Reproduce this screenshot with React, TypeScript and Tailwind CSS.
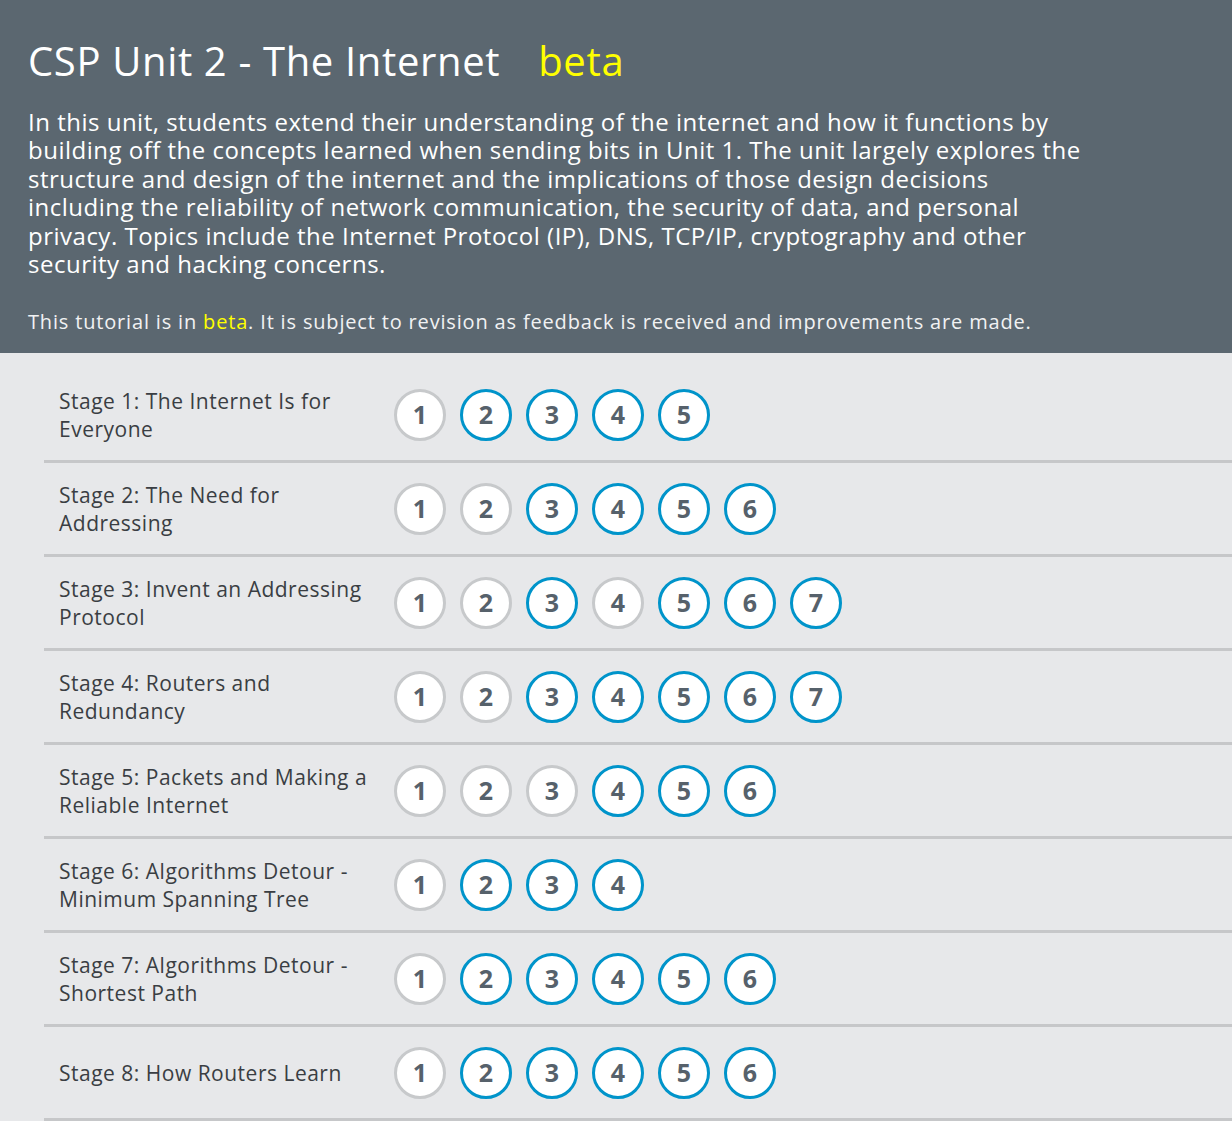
import React from 'react';

type Lesson = 'done' | 'todo';

const stages: { title: string[]; lessons: Lesson[] }[] = [
  { title: ['Stage 1: The Internet Is for', 'Everyone'], lessons: ['done', 'todo', 'todo', 'todo', 'todo'] },
  { title: ['Stage 2: The Need for', 'Addressing'], lessons: ['done', 'done', 'todo', 'todo', 'todo', 'todo'] },
  { title: ['Stage 3: Invent an Addressing', 'Protocol'], lessons: ['done', 'done', 'todo', 'done', 'todo', 'todo', 'todo'] },
  { title: ['Stage 4: Routers and', 'Redundancy'], lessons: ['done', 'done', 'todo', 'todo', 'todo', 'todo', 'todo'] },
  { title: ['Stage 5: Packets and Making a', 'Reliable Internet'], lessons: ['done', 'done', 'done', 'todo', 'todo', 'todo'] },
  { title: ['Stage 6: Algorithms Detour -', 'Minimum Spanning Tree'], lessons: ['done', 'todo', 'todo', 'todo'] },
  { title: ['Stage 7: Algorithms Detour -', 'Shortest Path'], lessons: ['done', 'todo', 'todo', 'todo', 'todo', 'todo'] },
  { title: ['Stage 8: How Routers Learn'], lessons: ['done', 'todo', 'todo', 'todo', 'todo', 'todo'] },
];

const description = [
  'In this unit, students extend their understanding of the internet and how it functions by',
  'building off the concepts learned when sending bits in Unit 1. The unit largely explores the',
  'structure and design of the internet and the implications of those design decisions',
  'including the reliability of network communication, the security of data, and personal',
  'privacy. Topics include the Internet Protocol (IP), DNS, TCP/IP, cryptography and other',
  'security and hacking concerns.',
];

const font = { fontFamily: '"Open Sans", "Noto Sans", Arial, sans-serif' };

const Bubble: React.FC<{ n: number; state: Lesson }> = ({ n, state }) => (
  <div
    className={`w-[52px] h-[52px] rounded-full bg-white border-[3px] flex items-center justify-center text-[25px] font-bold text-[#56616b] ${
      state === 'done' ? 'border-[#c7c9cb]' : 'border-[#0094ca]'
    }`}
  >
    {n}
  </div>
);

export default function App() {
  return (
    <div className="min-h-screen bg-[#e7e8ea]" style={font}>
      {/* Header */}
      <header className="bg-[#5b6770] text-white px-7 pt-[38px] pb-[17px]">
        <h1 className="text-[40px] leading-[46px] font-normal tracking-[0.65px] whitespace-nowrap">
          CSP Unit 2 - The Internet<span className="ml-[38px] text-[#ffff00]">beta</span>
        </h1>
        <div className="mt-[24px] text-[24px] leading-[28.4px] tracking-[0.5px] whitespace-nowrap">
          {description.map((line) => (
            <div key={line}>{line}</div>
          ))}
        </div>
        <p className="mt-[30px] text-[20px] leading-[28px] tracking-[0.83px] text-[#f1f2f3] whitespace-nowrap">
          This tutorial is in <span className="text-[#ffff00]">beta</span>. It is subject to revision as feedback is
          received and improvements are made.
        </p>
      </header>

      {/* Stage list */}
      <div className="pt-[16px] pl-[44px]">
        {stages.map((s) => (
          <div key={s.title[0]} className="h-[94px] border-b-[3px] border-[#c6c7c9] flex items-center pl-[15px]">
            <div className="w-[320px] mr-[15px] text-[21px] leading-[28px] tracking-[0.5px] text-[#3a3e43] whitespace-nowrap">
              {s.title.map((t) => (
                <div key={t}>{t}</div>
              ))}
            </div>
            <div className="flex gap-[14px]">
              {s.lessons.map((l, i) => (
                <Bubble key={i} n={i + 1} state={l} />
              ))}
            </div>
          </div>
        ))}
      </div>
    </div>
  );
}
